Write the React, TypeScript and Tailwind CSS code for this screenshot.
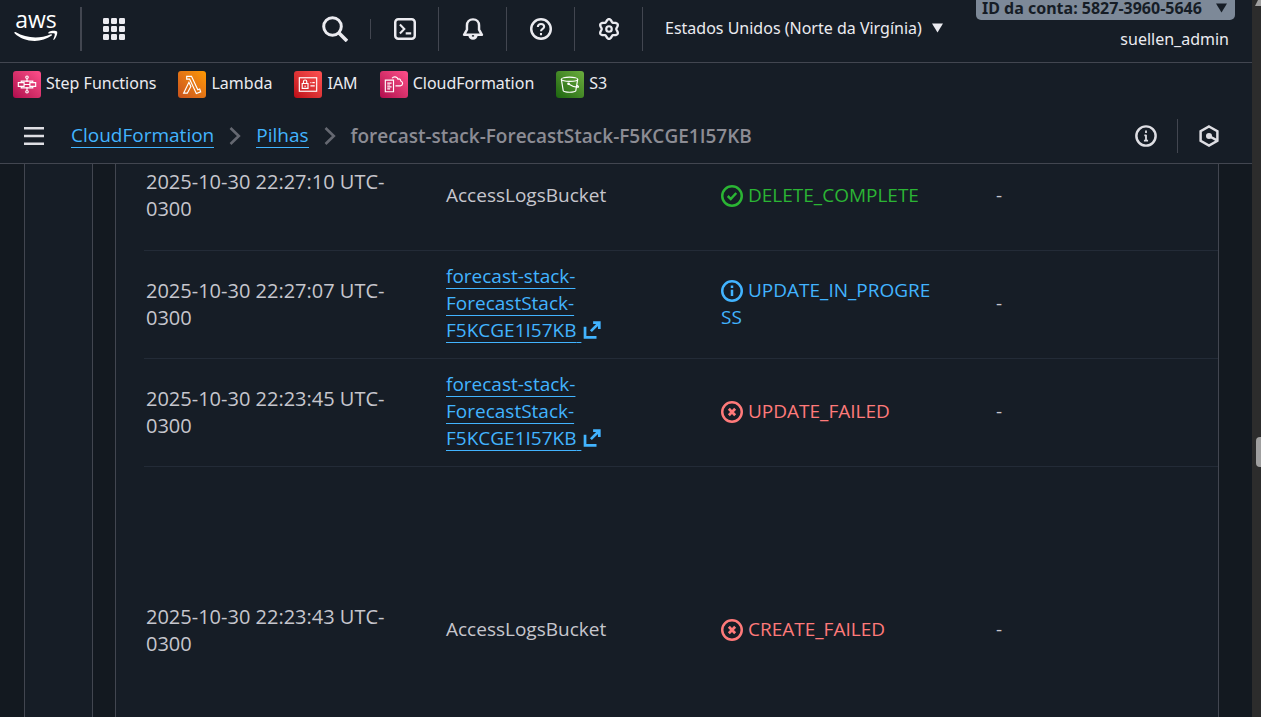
import type { ReactNode } from "react";

type Status = "ok" | "info" | "error";

interface StackEvent {
  time: string;
  resource: string[];
  linked?: boolean;
  status: string;
  kind: Status;
  tall?: boolean;
}

const events: StackEvent[] = [
  { time: "2025-10-30 22:27:10", resource: ["AccessLogsBucket"], status: "DELETE_COMPLETE", kind: "ok" },
  { time: "2025-10-30 22:27:07", resource: ["forecast-stack-", "ForecastStack-", "F5KCGE1I57KB"], linked: true, status: "UPDATE_IN_PROGRESS", kind: "info" },
  { time: "2025-10-30 22:23:45", resource: ["forecast-stack-", "ForecastStack-", "F5KCGE1I57KB"], linked: true, status: "UPDATE_FAILED", kind: "error" },
  { time: "2025-10-30 22:23:43", resource: ["AccessLogsBucket"], status: "CREATE_FAILED", kind: "error", tall: true },
];

const statusColor: Record<Status, string> = {
  ok: "text-[#2bb534]",
  info: "text-[#42b4ff]",
  error: "text-[#ff7a7a]",
};

function Icon({ children, className = "size-[22px]" }: { children: ReactNode; className?: string }) {
  return (
    <svg viewBox="0 0 16 16" className={className} fill="none" stroke="currentColor" strokeWidth="1.8" aria-hidden="true">
      {children}
    </svg>
  );
}

function StatusIcon({ kind }: { kind: Status }) {
  return (
    <Icon className="mr-[5px] inline-block size-[22px] align-[-5px]">
      <circle cx="8" cy="8" r="7.1" />
      {kind === "ok" && <path d="m4.9 8 2.2 2.2 4-4.4" />}
      {kind === "info" && <path d="M8 4v1.8M8 7v4.6" />}
      {kind === "error" && <path d="m5.7 5.7 4.6 4.6m0-4.6-4.6 4.6" strokeWidth="2" />}
    </Icon>
  );
}

function InfoIcon() {
  return (
    <Icon>
      <circle cx="8" cy="8" r="7" />
      <path d="M8 4v1.8M8 7v4.6M6.8 7.6H8M6.5 11.3h3" strokeWidth="1.3" />
    </Icon>
  );
}

function AwsLogo() {
  return (
    <svg viewBox="0 0 44 30" className="h-[30px] w-[44px] overflow-visible" fill="#fff" role="img" aria-label="AWS">
      <text x="22" y="15" textAnchor="middle" fontFamily="Open Sans, Noto Sans, sans-serif" fontSize="23" fontWeight="500">
        aws
      </text>
      <path d="M.4 19.4c.3-.6.9-.5 1.5-.1 5.500 3.200 12.500 5.200 19.600 5.200 5 0 10.200-1 15.300-3.200 1-.4 1.800.6.9 1.300-4.600 3.500-11.200 5.300-16.900 5.300C12.800 27.900 5.600 25 .8 20.400c-.4-.3-.5-.7-.4-1Z" />
      <path d="M34.500 19.200c2.800-1.900 7.600-1.500 8.500-.7.800 1-.3 5.900-2.900 8.200-.5.400-.9.200-.7-.4.600-1.500 1.800-4.700 1.300-5.500-.6-.8-3.900-.5-5.700-.3-.7.1-.9-.8-.5-1.300Z" />
    </svg>
  );
}

function SearchIcon() {
  return (
    <svg viewBox="0 0 26 26" className="size-[26px]" fill="none" stroke="currentColor" strokeWidth="3" aria-hidden="true">
      <circle cx="10.500" cy="10.500" r="8.800" />
      <path d="m17 17 8 8" strokeWidth="3.600" />
    </svg>
  );
}

function GridIcon() {
  return (
    <svg viewBox="0 0 22 22" className="size-[22px]" fill="currentColor" aria-hidden="true">
      {[0, 8, 16].map((y) => [0, 8, 16].map((x) => <rect key={`${x}-${y}`} x={x} y={y} width="6" height="6" rx="1.200" />))}
    </svg>
  );
}

const gearPath = Array.from({ length: 97 }, (_, i) => {
  const a = (i / 96) * Math.PI * 2;
  const r = 6.25 - 0.95 * Math.cos(6 * a);
  return `${i ? "L" : "M"}${(8 + r * Math.cos(a)).toFixed(2)} ${(8 + r * Math.sin(a)).toFixed(2)}`;
}).join("") + "Z";

const tools: { label: string; icon: ReactNode }[] = [
  {
    label: "CloudShell",
    icon: (
      <Icon>
        <rect x=".9" y=".9" width="14.200" height="14.200" rx="2.200" />
        <path d="M4.300 4.700 7.500 8l-3.200 3.300M8.500 11.200h4" strokeWidth="1.500" />
      </Icon>
    ),
  },
  {
    label: "Notificações",
    icon: (
      <Icon>
        <path d="M8 1C5.300 1 3.600 3 3.600 5.500v3L1.500 12.200h13L12.400 8.500v-3C12.400 3 10.700 1 8 1Z" strokeLinejoin="round" />
        <path d="M5.500 12.500a2.500 2.500 0 0 0 5 0Z" fill="currentColor" />
        <path d="M7.200 13h1.600" stroke="#161d26" strokeWidth="1" />
      </Icon>
    ),
  },
  {
    label: "Ajuda",
    icon: (
      <Icon>
        <circle cx="8" cy="8" r="7.100" />
        <path d="M5.700 6.600C5.700 5.100 6.700 4.300 8 4.300s2.300.8 2.300 2C10.300 7.900 8 7.900 8 9.700M8 10.900v1.600" strokeWidth="1.500" />
      </Icon>
    ),
  },
  {
    label: "Configurações",
    icon: (
      <Icon>
        <path d={gearPath} strokeWidth="1.700" />
        <circle cx="8" cy="8" r="2" strokeWidth="1.600" />
      </Icon>
    ),
  },
];

const services: { name: string; tile: string; icon: ReactNode }[] = [
  {
    name: "Step Functions",
    tile: "from-[#b0084d] to-[#ff4f8b]",
    icon: (
      <>
        <circle cx="14" cy="6.500" r="1.300" />
        <circle cx="14" cy="21.500" r="1.300" />
        <path d="M14 8v3.500M14 16.500v3.500M5 12h6v4H5zM17 12h6v4h-6zM8 12v-1.500h12V12M8 16v1.500h12V16M11 14h6" />
      </>
    ),
  },
  {
    name: "Lambda",
    tile: "from-[#c8511b] to-[#ff9900]",
    icon: <path d="M8.500 5.500h5l6.500 14 2-.8 1 2.900-4.500 1.700-7-14.900H8.500zM10.800 11.700l2 4.300-3.700 7H5.300z" />,
  },
  {
    name: "IAM",
    tile: "from-[#bd0816] to-[#ff5252]",
    icon: (
      <>
        <rect x="5" y="7" width="18" height="14" />
        <path d="M8 13h6v5H8zM9.300 13v-2a1.700 1.700 0 0 1 3.400 0v2M11 15v1.500M16.500 12h1M18.500 12h2.500M16.500 15.500h4.500" />
      </>
    ),
  },
  {
    name: "CloudFormation",
    tile: "from-[#b0084d] to-[#ff4f8b]",
    icon: (
      <path d="M5 9.500h8.500v12H5zM7 12.500h4.500M7 14.500h3M7 16.500h4.500M7 18.500h3M12 7.500c1.500-2.200 5-2 6.200 1 1.500-.8 2.800.2 2.800 1.800 2.600.8 2.700 4.700-.5 5.200H15.500" />
    ),
  },
  {
    name: "S3",
    tile: "from-[#1b660f] to-[#6cae3e]",
    icon: (
      <>
        <ellipse cx="13.500" cy="8.500" rx="8.500" ry="2.200" />
        <path d="m5 8.500 2 12c1 2 12 2 13 0l2-12M12.500 13.500c3 2 7 3.500 10 3.200 1-.3-.5-1.700-2-2.500" />
        <circle cx="12.500" cy="13.200" r=".8" fill="#fff" />
      </>
    ),
  },
];

function Caret() {
  return (
    <svg viewBox="0 0 11 10" className="h-[10px] w-[11px] shrink-0" fill="currentColor" aria-hidden="true">
      <path d="M0 .5h11L5.500 9.500Z" />
    </svg>
  );
}

function Chevron() {
  return (
    <svg viewBox="0 0 12 20" className="mx-[15px] h-5 w-3" fill="none" stroke="#656871" strokeWidth="2.600" aria-hidden="true">
      <path d="m1.500 2 8.300 8-8.300 8" />
    </svg>
  );
}

export default function App() {
  return (
    <div className="flex h-screen overflow-hidden bg-[#131920] font-['Open_Sans','Noto_Sans',sans-serif] text-[#c6c6cd]">
      <div className="flex min-w-0 flex-1 flex-col">
        <header className="shrink-0 bg-[#161d26] text-[#ebebf0]">
          <div className="flex h-[63px] items-start overflow-hidden border-b border-[#424650] pr-[17px] font-['Noto_Sans','Open_Sans',sans-serif]">
            <a href="#home" className="ml-[14px] mt-[13px]">
              <AwsLogo />
            </a>
            <div className="ml-[22px] mt-[7px] h-11 w-[2px] bg-[#424650]" />
            <button type="button" aria-label="Serviços" className="ml-[21px] mt-[18px]">
              <GridIcon />
            </button>
            <button type="button" aria-label="Pesquisar" className="ml-auto mr-[22px] mt-4">
              <SearchIcon />
            </button>
            <div className="mt-[19px] h-5 w-px bg-[#424650]" />
            {tools.map((t) => (
              <button
                key={t.label}
                type="button"
                aria-label={t.label}
                className="mt-[7px] flex h-11 w-[68px] items-center justify-center border-r border-[#424650]"
              >
                {t.icon}
              </button>
            ))}
            <div className="mt-[14px] w-[333px] pl-[22px]">
              <button type="button" className="flex items-center gap-[10px] text-base leading-7 whitespace-nowrap">
                Estados Unidos (Norte da Virgínia)
                <Caret />
              </button>
            </div>
            <div className="flex h-[62px] w-[259px] shrink-0 flex-col items-end justify-end pb-[9px]">
              <button
                type="button"
                className="flex h-6 w-full shrink-0 items-center justify-between rounded-[5px] bg-[#7d8998] px-[6px] pr-2 text-base leading-6 font-bold whitespace-nowrap text-[#161d26]"
              >
                ID da conta: 5827-3960-5646
                <Caret />
              </button>
              <span className="mt-[5px] mr-[6px] text-base leading-7">suellen_admin</span>
            </div>
          </div>
          <nav aria-label="Favoritos" className="flex h-[45px] items-center gap-[22px] pb-[2px] pl-[13px] font-['Noto_Sans','Open_Sans',sans-serif]">
            {services.map((s) => (
              <a key={s.name} href="#service" className="flex items-start gap-[5px] text-base leading-6 whitespace-nowrap">
                <span className={`rounded-[3px] bg-linear-to-tr ${s.tile}`}>
                  <svg viewBox="0 0 28 28" className="h-[27px] w-7" fill="none" stroke="#fff" strokeWidth="1.200" aria-hidden="true">
                    {s.icon}
                  </svg>
                </span>
                {s.name}
              </a>
            ))}
          </nav>
          <div className="flex h-14 items-center border-b border-[#424650] pr-8 pl-6">
            <button type="button" aria-label="Abrir menu" className="mr-[27px]">
              <svg viewBox="0 0 20 18" className="h-[18px] w-5" fill="#dedee3" aria-hidden="true">
                <path d="M0 0h20v2.600H0zM0 7.700h20v2.600H0zM0 15.400h20V18H0z" />
              </svg>
            </button>
            <nav aria-label="Trilha" className="flex items-center text-[19px] leading-6">
              <a href="#cloudformation" className="border-b border-[#42b4ff] text-[#42b4ff]">CloudFormation</a>
              <Chevron />
              <a href="#pilhas" className="border-b border-[#42b4ff] text-[#42b4ff]">Pilhas</a>
              <Chevron />
              <span className="font-semibold text-[#8c8c94]">forecast-stack-ForecastStack-F5KCGE1I57KB</span>
            </nav>
            <div className="ml-auto flex items-center text-[#dedee3]">
              <button type="button" aria-label="Informações">
                <InfoIcon />
              </button>
              <div className="mx-5 h-[34px] w-px bg-[#424650]" />
              <button type="button" aria-label="Assistente">
                <Icon>
                  <path d="m8 1.100 6.100 3.400v7L8 14.900l-6.100-3.400v-7z" />
                  <circle cx="8" cy="8" r="2.200" fill="currentColor" stroke="none" />
                  <path d="m8 8 5.500 3" />
                </Icon>
              </button>
            </div>
          </div>
        </header>

        <main className="flex min-h-0 flex-1 overflow-hidden bg-[#131920]">
          <div className="ml-6 w-[69px] shrink-0 border-x border-[#424650] bg-[#161d26]" />
          <section className="mr-[33px] ml-[22px] min-w-0 flex-1 border-x border-[#424650] bg-[#161d26] pl-7">
            <table className="-mt-[22px] w-full table-fixed border-collapse text-left text-[19px] leading-[27px]">
              <colgroup>
                <col className="w-[300px]" />
                <col className="w-[275px]" />
                <col className="w-[275px]" />
                <col />
              </colgroup>
              <tbody>
                {events.map((e) => (
                  <tr key={e.time} className={`border-b border-[#232b37] ${e.tall ? "h-[328px]" : "h-[108px]"}`}>
                    <td className="pr-10 pb-px pl-[2px] text-[20px]">
                      {e.time} UTC-
                      <wbr />
                      0300
                    </td>
                    <td className="pr-10 pb-px pl-[2px]">
                      {e.linked ? (
                        <a href="#stack" className="text-[#42b4ff] underline decoration-1 underline-offset-[5px] [text-decoration-skip-ink:none]">
                          {e.resource[0]}
                          <wbr />
                          {e.resource[1]}
                          <wbr />
                          <span className="whitespace-nowrap">
                            {e.resource[2]}{" "}
                            <Icon className="ml-[2px] inline-block size-[18px] align-[-2px]">
                              <path d="M9 1.500h5.500V7M14.500 1.500 7 9M1.800 5v9.500H12" strokeWidth="2.400" />
                            </Icon>
                          </span>
                        </a>
                      ) : (
                        e.resource[0]
                      )}
                    </td>
                    <td className={`pr-[60px] pb-px pl-[2px] break-all ${statusColor[e.kind]}`}>
                      <StatusIcon kind={e.kind} />
                      {e.status}
                    </td>
                    <td className="pb-px pl-[2px]">-</td>
                  </tr>
                ))}
              </tbody>
            </table>
          </section>
        </main>
      </div>

      <div aria-hidden="true" className="flex w-[9px] shrink-0 flex-col items-end justify-between overflow-hidden bg-[#2c2c2c]">
        <svg viewBox="0 0 6 6" className="size-[6px]" fill="#9f9f9f">
          <path d="M3 0h3v6H0Z" />
        </svg>
        <div className="mb-[250px] h-[30px] w-[5px] rounded-l-[4px] bg-[#9f9f9f]" />
      </div>
    </div>
  );
}
